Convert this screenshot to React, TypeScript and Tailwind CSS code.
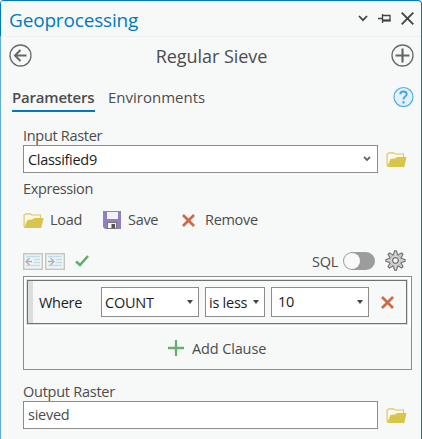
import React from "react";

function Folder() {
  return (
    <svg width="21" height="17" viewBox="0 0 21 17" className="block shrink-0">
      <path d="M1.100 15V3L3 1.800h4.500L9 3H17.500V7" fill="#fbf9ec" stroke="#dac860" strokeWidth="1.200" />
      <path d="M1 16 4.500 8 9 7.500 11.300 5.900H20.600L18.300 16Z" fill="#d9c54c" />
    </svg>
  );
}

function Cross({ size }: { size: number }) {
  return (
    <svg width={size} height={size} viewBox="0 0 12 12" className="block shrink-0">
      <path d="M.9.900 11.100 11.100M11.100.900.900 11.100" stroke="#cd6a4a" strokeWidth="2.500" fill="none" />
    </svg>
  );
}

function Caret() {
  return (
    <svg width="6" height="4" viewBox="0 0 6 4" className="block shrink-0">
      <path d="M0 0H6L3 4Z" fill="#444" />
    </svg>
  );
}

function Indent({ right }: { right?: boolean }) {
  return (
    <svg width="20" height="17" viewBox="0 0 20 17" className="block shrink-0">
      <rect x="0.700" y="0.700" width="18.600" height="15.600" fill="#f2f4f4" stroke="#c4c6c6" strokeWidth="1.400" />
      <path d="M3 3.500H17M10.500 6.500H17M10.500 9.500H17M3 12.500H17" stroke="#bcdff0" strokeWidth="1.300" />
      <path d={right ? "M3 8.500H8.500M5.500 5 9 8.500 5.500 12" : "M3.500 8.500H9M6.500 5 3 8.500 6.500 12"} fill="none" stroke="#b0b0b0" strokeWidth="1.300" />
    </svg>
  );
}

function Gear() {
  const teeth = [0, 45, 90, 135, 180, 225, 270, 315];
  return (
    <svg width="21" height="21" viewBox="-10.5 -10.5 21 21" className="block shrink-0">
      <circle r="6" fill="#d2d2d2" stroke="#757575" strokeWidth="1.300" />
      {teeth.map((a) => (
        <path key={a} d="M-2.200-5.600-.9-9.600H.9L2.200-5.600" transform={`rotate(${a})`} fill="#d2d2d2" stroke="#757575" strokeWidth="1.200" />
      ))}
      <circle r="5.400" fill="#d2d2d2" />
      <circle r="2.900" fill="#f7f9f8" stroke="#757575" strokeWidth="1.300" />
    </svg>
  );
}

function Combo({ text, className, gap }: { text: string; className: string; gap: string }) {
  return (
    <div className={`flex h-[30px] shrink-0 items-center justify-between border border-[#8c8c8c] bg-white pr-[5px] text-[#1c1c1c] ${className}`}>
      <span className={`overflow-hidden whitespace-nowrap ${gap}`}>{text}</span>
      <Caret />
    </div>
  );
}

export default function App() {
  return (
    <div className="flex h-[439px] w-[422px] flex-col overflow-hidden rounded-t-[4px] border-t border-r border-[#0079c1] bg-[#f7f9f8] font-['Open_Sans','Noto_Sans',sans-serif] text-[14.500px] leading-[20px] whitespace-nowrap text-[#4c4c4c]">
      <header className="flex h-[36px] shrink-0 items-center border-b border-l border-b-[#eff1f1] border-l-[#0079c1] pr-[7px] pl-[8px]">
        <h1 className="pt-[2px] text-[19px] leading-[26px] tracking-[-0.170px] text-[#0079c1]">Geoprocessing</h1>
        <div className="ml-auto flex items-center gap-[10px]">
          <svg width="10" height="7" viewBox="0 0 10 7"><path d="M1 1 5 5.200 9 1" fill="none" stroke="#444" strokeWidth="1.800" /></svg>
          <svg width="13" height="9" viewBox="0 0 13 9"><path d="M0 4.500H4.500M4.500 0V9M4.500 1.500H12V6.500H4.500" fill="none" stroke="#444" strokeWidth="1.300" /><path d="M4.500 6.500H12.500" stroke="#444" strokeWidth="2" /></svg>
          <svg width="13" height="13" viewBox="0 0 13 13"><path d="M.7.700 12.300 12.300M12.300.700.700 12.300" stroke="#444" strokeWidth="1.900" /></svg>
        </div>
      </header>
      <main className="flex flex-1 flex-col border-l border-[#65add9]">
        <div className="flex h-[37px] shrink-0 items-center justify-between pr-[7px] pl-[8px]">
          <svg width="23" height="23" viewBox="0 0 23 23"><circle cx="11.500" cy="11.500" r="10.500" fill="none" stroke="#6a6a6a" strokeWidth="1.300" /><path d="M6 11.500H17.500" stroke="#666" strokeWidth="2.200" /><path d="M11.500 6 6 11.500 11.500 17" fill="none" stroke="#666" strokeWidth="2" /></svg>
          <h2 className="text-[18px] leading-[24px] tracking-[-0.050px]">Regular Sieve</h2>
          <svg width="23" height="23" viewBox="0 0 23 23" className="mt-[-1px]"><circle cx="11.500" cy="11.500" r="10.500" fill="none" stroke="#6a6a6a" strokeWidth="1.300" /><path d="M4.500 11.500H18.500M11.500 4.500V18.500" stroke="#666" strokeWidth="2.200" /></svg>
        </div>
        <div className="mt-[12px] flex h-[26px] shrink-0 items-start pr-[7px] pl-[11px]">
          <div className="h-[26px] w-[83px] border-b-2 border-[#0079c1] text-[15px] leading-[22px] font-semibold tracking-[-0.200px]">Parameters</div>
          <div className="ml-[13px] text-[15px] leading-[22px]">Environments</div>
          <svg width="21" height="21" viewBox="0 0 21 21" className="ml-auto"><circle cx="10.500" cy="11" r="9.500" fill="#e2f1fb" stroke="#55aee3" strokeWidth="1.200" /><path d="M7.300 8.200C7.300 6.200 8.600 5.500 10.500 5.500s3.200 1 3.200 2.700c0 2.300-3.200 2.300-3.200 5.200" fill="none" stroke="#46a6df" strokeWidth="1.900" /><path d="M9.400 15.200h2.200v2.200h-2.200z" fill="#46a6df" /></svg>
        </div>
        <div className="mt-[14px] flex flex-col pl-[22px]">
          <label className="tracking-[-0.300px]">Input Raster</label>
          <div className="mt-[-1px] flex items-center">
            <div className="flex h-[28px] w-[355px] items-center justify-between border border-[#8c8c8c] bg-white pr-[6px] pl-[4px] text-[#1c1c1c]">
              <span className="pt-[2px] tracking-[-0.300px]">Classified9</span>
              <svg width="8" height="6" viewBox="0 0 8 6"><path d="M1 1 4 4 7 1" fill="none" stroke="#666" strokeWidth="1.800" /></svg>
            </div>
            <div className="ml-[8px]"><Folder /></div>
          </div>
          <div className="mt-[6px] tracking-[-0.370px]">Expression</div>
          <div className="mt-[9px] flex h-[24px] items-center">
            <Folder />
            <span className="ml-[6px] w-[53px] tracking-[-0.300px]">Load</span>
            <svg width="18" height="18" viewBox="0 0 18 18"><path d="M0 0H18V18H2L0 16Z" fill="#9180bd" /><path d="M4 1H15V8H4Z" fill="#f3f1f8" /><path d="M4 11H14V18H4Z" fill="#777" /><path d="M5 12H13V17H5Z" fill="#f7f7f7" /><path d="M8.500 13H12V17H8.500Z" fill="#555" /></svg>
            <span className="ml-[7px] w-[54px] tracking-[-0.300px]">Save</span>
            <Cross size={13} />
            <span className="ml-[10px] tracking-[-0.300px]">Remove</span>
          </div>
        </div>
        <div className="mt-[17px] flex h-[24px] shrink-0 items-center pr-[15px] pl-[22px]">
          <Indent />
          <div className="ml-[2px]"><Indent right /></div>
          <svg width="14" height="12" viewBox="0 0 14 12" className="mt-[-1px] ml-[10px]"><path d="M1 6.500 5 10 13 1" fill="none" stroke="#5fac66" strokeWidth="2.500" /></svg>
          <span className="ml-auto pt-[1px] tracking-[-0.300px]">SQL</span>
          <div className="ml-[5px] h-[18px] w-[32px] rounded-full bg-[#9c9c9c] p-px"><div className="size-[16px] rounded-full bg-[#f9f9f9]" /></div>
          <div className="mt-[-1px] ml-[10px]"><Gear /></div>
        </div>
        <section className="mt-[3px] ml-[22px] flex h-[94px] w-[389px] shrink-0 flex-col border border-[#8c8c8c]">
          <div className="bg-white p-[3px]">
            <div className="flex h-[44px] w-[380px] items-center border border-[#707070] bg-[#f7f9f8] shadow-[0_0_0_1px_#dedede]">
              <div className="h-full w-[5px] bg-[#dcdcdc]" />
              <span className="ml-[6px] w-[62px] pt-px tracking-[-0.300px] text-[#1c1c1c]">Where</span>
              <Combo text="COUNT" className="w-[98px] pl-[3px]" gap="pt-px tracking-[-0.250px]" />
              <Combo text="is less" className="ml-[6px] w-[60px] pl-[3px]" gap="w-[42px] pt-px tracking-[-0.250px]" />
              <Combo text="10" className="ml-[6px] w-[98px] pl-[6px]" gap="pb-px tracking-[-0.300px]" />
              <div className="ml-[12px]"><Cross size={13} /></div>
            </div>
          </div>
          <div className="flex flex-1 items-center pl-[144px]">
            <svg width="16" height="16" viewBox="0 0 16 16"><path d="M0 8H16M8 0V16" stroke="#66ae6c" strokeWidth="2.300" /></svg>
            <span className="ml-[8px] pt-[2px] tracking-[-0.130px]">Add Clause</span>
          </div>
        </section>
        <div className="mt-[12px] flex flex-col pl-[22px]">
          <label className="tracking-[-0.250px]">Output Raster</label>
          <div className="mt-[-1px] flex items-center">
            <div className="flex h-[28px] w-[355px] items-center border border-[#8c8c8c] bg-white pl-[4px]"><span className="tracking-[-0.250px]">sieved</span></div>
            <div className="ml-[8px]"><Folder /></div>
          </div>
        </div>
      </main>
    </div>
  );
}
